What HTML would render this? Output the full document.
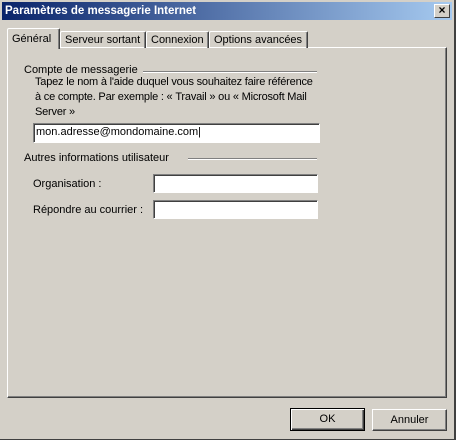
<!DOCTYPE html><html><head><style>
*{margin:0;padding:0;box-sizing:border-box}
body{width:456px;height:440px;background:#d4d0c8;font:11px "Liberation Sans",sans-serif;color:#000;position:relative;overflow:hidden}
.a{position:absolute}
#win{left:0;top:0;width:456px;height:440px;border-right:2px solid #404040;border-bottom:1px solid #404040}
#title{left:2px;top:2px;width:450px;height:18px;background:linear-gradient(90deg,#0a246a,#a6caf0);color:#fff;font-weight:bold;font-size:11.5px;line-height:18px;padding-left:3px}
#x{left:434px;top:4px;width:16px;height:14px;background:#d4d0c8;border:1px solid;border-color:#fff #404040 #404040 #fff;font-size:12px;font-weight:bold;line-height:11px;text-align:center;color:#000}
#panel{left:7px;top:47px;width:440px;height:351px;border:1px solid;border-color:#fff #404040 #404040 #fff;box-shadow:inset -1px -1px #808080}
.tab{top:31px;height:17px;border:1px solid;border-bottom:none;border-color:#fff #404040 #fff #fff;box-shadow:inset -1px 0 #808080;padding:0 4px;line-height:17px;border-radius:2px 2px 0 0}
.sel{top:28px;height:21px;background:#d4d0c8;z-index:2;line-height:20px}
.line{height:2px;border-top:1px solid #808080;border-bottom:1px solid #fff}
.in{background:#fff;border:1px solid;border-color:#808080 #fff #fff #808080;box-shadow:inset 1px 1px #404040}
.btn{border:1px solid;border-color:#fff #404040 #404040 #fff;box-shadow:inset -1px -1px #808080;text-align:center;line-height:20px}
</style></head><body>
<div class="a" id="win"></div>
<div class="a" id="title">Paramètres de messagerie Internet</div>
<div class="a" id="x">×</div>
<div class="a" id="panel"></div>
<div class="a tab sel" style="left:7px;width:53px">Général</div>
<div class="a tab" style="left:60px;width:86px">Serveur sortant</div>
<div class="a tab" style="left:146px;width:63px">Connexion</div>
<div class="a tab" style="left:209px;width:99px">Options avancées</div>
<div class="a" style="left:24px;top:64px">Compte de messagerie</div>
<div class="a line" style="left:143px;top:71px;width:174px"></div>
<div class="a" style="left:35px;top:75px;line-height:15px;width:300px;letter-spacing:-0.2px">Tapez le nom à l'aide duquel vous souhaitez faire référence<br>à ce compte. Par exemple : «&nbsp;Travail&nbsp;» ou «&nbsp;Microsoft Mail<br>Server&nbsp;»</div>
<div class="a in" style="left:33px;top:123px;width:287px;height:20px;padding:2px 0 0 2px">mon.adresse@mondomaine.com|</div>
<div class="a" style="left:24px;top:152px">Autres informations utilisateur</div>
<div class="a line" style="left:188px;top:158px;width:129px"></div>
<div class="a" style="left:33px;top:178px">Organisation :</div>
<div class="a in" style="left:153px;top:174px;width:165px;height:19px"></div>
<div class="a" style="left:33px;top:204px">Répondre au courrier :</div>
<div class="a in" style="left:153px;top:200px;width:165px;height:19px"></div>
<div class="a btn" style="left:290px;top:408px;width:75px;height:23px;border:1px solid #000;box-shadow:inset 1px 1px #fff,inset -1px -1px #404040,inset -2px -2px #808080;line-height:21px">OK</div>
<div class="a btn" style="left:372px;top:409px;width:75px;height:22px">Annuler</div>
</body></html>
